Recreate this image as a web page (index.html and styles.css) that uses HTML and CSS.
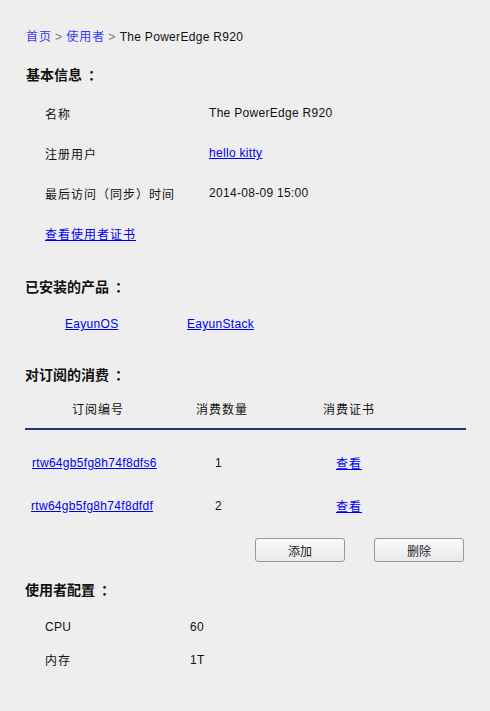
FILE: index.html
```html
<!DOCTYPE html>
<html lang="zh-CN">
<head>
<meta charset="utf-8">
<title>使用者详情</title>
<link rel="stylesheet" href="styles.css">
</head>
<body>
<div class="page">
  <nav class="crumbs">
    <a href="#" class="crumb-link zh">首页</a><span class="sep">&gt;</span><a href="#" class="crumb-link zh">使用者</a><span class="sep">&gt;</span><span class="crumb-cur">The PowerEdge R920</span>
  </nav>

  <h2 class="title t1">基本信息<span class="colon">：</span></h2>
  <div class="info">
    <div class="info-row"><span class="lbl zh">名称</span><span class="val">The PowerEdge R920</span></div>
    <div class="info-row"><span class="lbl zh">注册用户</span><a href="#" class="val link">hello kitty</a></div>
    <div class="info-row"><span class="lbl zh">最后访问（同步）时间</span><span class="val">2014-08-09 15:00</span></div>
    <div class="info-row"><a href="#" class="lbl link zh">查看使用者证书</a></div>
  </div>

  <h2 class="title t2">已安装的产品<span class="colon">：</span></h2>
  <div class="products">
    <a href="#" class="link prod">EayunOS</a>
    <a href="#" class="link prod">EayunStack</a>
  </div>

  <h2 class="title t3">对订阅的消费<span class="colon">：</span></h2>
  <div class="table">
    <div class="thead zh">
      <span class="c1 center">订阅编号</span>
      <span class="c2 center">消费数量</span>
      <span class="c3 center">消费证书</span>
    </div>
    <div class="tbody">
      <div class="trow">
        <a href="#" class="c1 link id1">rtw64gb5fg8h74f8dfs6</a>
        <span class="c2 num">1</span>
        <span class="c3 center"><a href="#" class="link zh">查看</a></span>
      </div>
      <div class="trow">
        <a href="#" class="c1 link id2">rtw64gb5fg8h74f8dfdf</a>
        <span class="c2 num">2</span>
        <span class="c3 center"><a href="#" class="link zh">查看</a></span>
      </div>
    </div>
  </div>
  <div class="actions">
    <button class="btn">添加</button>
    <button class="btn">删除</button>
  </div>

  <h2 class="title t4">使用者配置<span class="colon">：</span></h2>
  <div class="config">
    <div class="cfg-row"><span class="cfg-lbl">CPU</span><span>60</span></div>
    <div class="cfg-row"><span class="cfg-lbl zh">内存</span><span>1T</span></div>
  </div>
</div>
</body>
</html>
```

FILE: styles.css
```css
html, body {
  margin: 0;
  padding: 0;
  background: #eeeeee;
}
body {
  font-family: "Liberation Sans", Arial, "Noto Sans CJK SC", sans-serif;
  font-size: 12px;
  letter-spacing: 0.3px;
  color: #111;
}
.zh { letter-spacing: 1px; }
.page {
  padding: 27px 24px 0 25px;
  width: 441px;
}
a { color: #0000ee; }
.link { text-decoration: underline; }

.crumbs {
  line-height: 20px;
  height: 20px;
  padding-left: 1px;
  display: flex;
  align-items: center;
}
.crumb-link { color: #3838f0; text-decoration: none; }
.sep { color: #777; margin: 0 4px 0 3px; }
.crumb-cur { color: #111; }

.title {
  margin: 0;
  font-size: 14px;
  font-weight: bold;
  line-height: 20px;
  height: 20px;
  letter-spacing: 0;
  color: #111;
  padding-left: 1px;
}
.colon {
  margin-left: 6px;
}
.t1 { margin-top: 18px; }
.t2 { margin-top: 24px; padding-left: 0; }
.t3 { margin-top: 31px; padding-left: 0; }
.t4 { margin-top: 18px; padding-left: 0; }

.info { margin-top: 8px; }
.info-row {
  height: 40px;
  display: flex;
  align-items: center;
  padding-left: 20px;
}
.lbl { width: 164px; flex: none; }

.products {
  margin-top: 17px;
  height: 20px;
  line-height: 20px;
  display: flex;
  padding-left: 40px;
}
.prod:first-child { width: 122px; }

.table { margin-top: 13px; }
.thead, .trow {
  display: grid;
  grid-template-columns: 146px 102px 152px;
  align-items: center;
}
.thead {
  height: 20px;
  padding-bottom: 10px;
  border-bottom: 2px solid #1d3584;
}
.center { text-align: center; }
.tbody { padding-top: 11px; }
.trow { height: 43px; }
.id1 { justify-self: start; margin-left: 7px; }
.id2 { justify-self: start; margin-left: 6px; }
.num { padding-left: 44px; }

.actions {
  margin-top: 11px;
  display: flex;
  justify-content: flex-end;
  gap: 29px;
  padding-right: 2px;
}
.btn {
  width: 90px;
  height: 24px;
  font-family: "Noto Sans CJK SC", sans-serif;
  font-size: 12px;
  color: #222;
  background: linear-gradient(#fbfbfb, #e9e9e9);
  border: 1px solid #a39684;
  border-radius: 3px;
  padding: 0;
  letter-spacing: 0;
}

.config { margin-top: 10px; }
.cfg-row {
  height: 33px;
  display: flex;
  align-items: center;
  padding-left: 20px;
}
.cfg-lbl { width: 145px; flex: none; }
```
